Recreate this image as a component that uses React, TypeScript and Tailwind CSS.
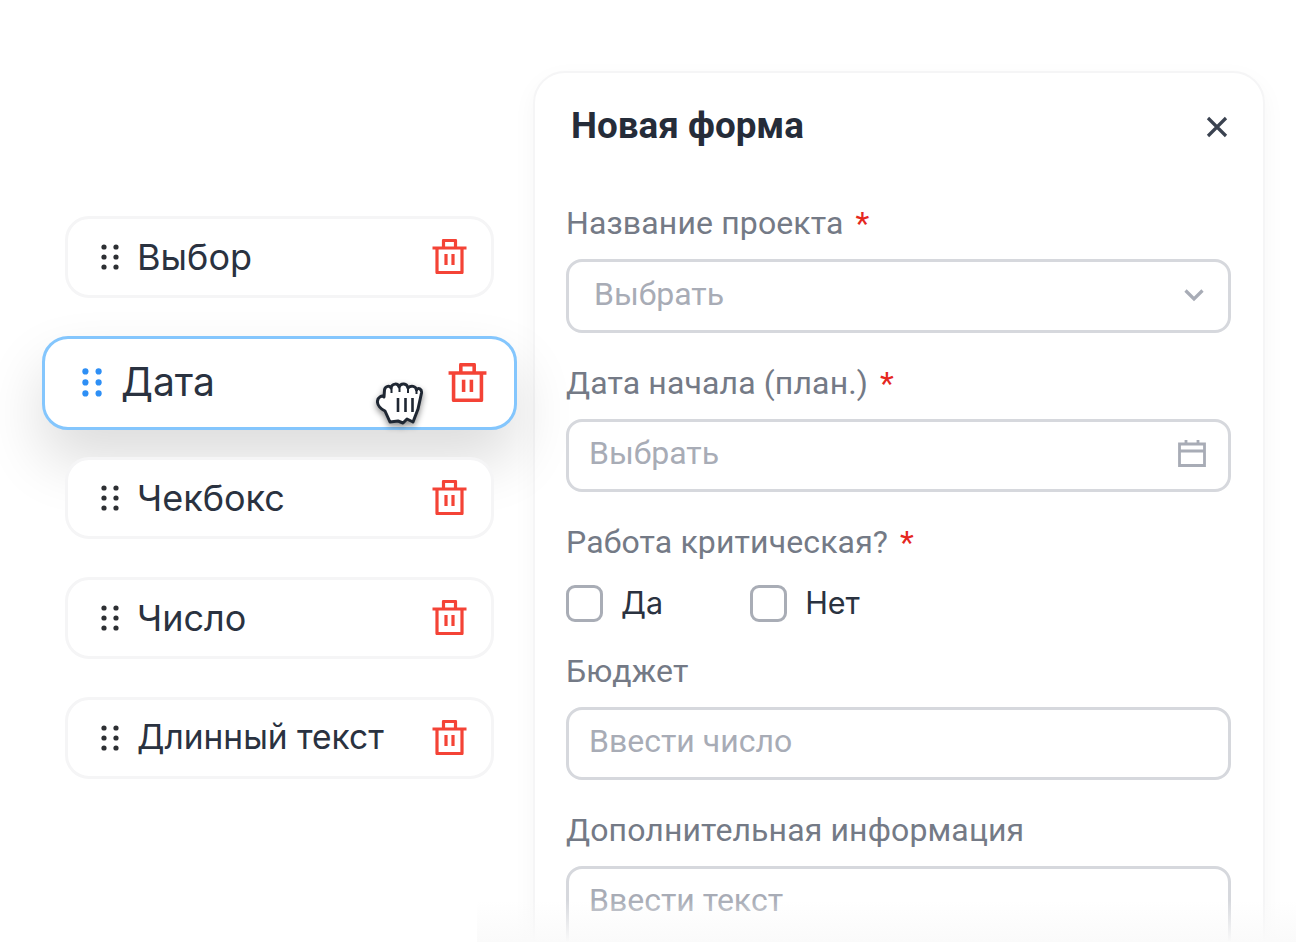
import React from "react";

function Dots({ className, size = 20, r = 2.6 }: { className: string; size?: number; r?: number }) {
  const xs = [4, 16];
  const ys = [3, 13, 23];
  return (
    <svg width={size} height={size * 1.4} viewBox="0 0 20 26" className={className}>
      {xs.map((x) => ys.map((y) => <circle key={`${x}-${y}`} cx={x} cy={y} r={r} fill="currentColor" />))}
    </svg>
  );
}

function Trash({ size = 35 }: { size?: number }) {
  return (
    <svg width={size} height={size} viewBox="0 0 35 35" fill="none" stroke="#f44336" strokeWidth="3.200" strokeLinejoin="round">
      <path d="M0.500 9H34.500" />
      <path d="M5 9V33.500H30V9" />
      <path d="M11.500 8V1.500H23.500V8" />
      <path d="M14 15V26" />
      <path d="M21 15V26" />
    </svg>
  );
}

function Row({ label, textClass = "text-[36px]", over = false }: { label: string; textClass?: string; over?: boolean }) {
  return (
    <div
      className={`flex h-[82px] w-[429px] items-center rounded-[24px] border-[3px] border-[#f5f5f6] bg-white pb-[1px] pl-[32px] pr-[24px] ${over ? "relative z-20" : ""}`}
    >
      <Dots className="shrink-0 text-[#2d2f33]" size={20} />
      <span className={`ml-[17px] flex-1 text-[#2a3240] [font-family:Inter,sans-serif] ${textClass}`}>{label}</span>
      <Trash />
    </div>
  );
}

function Label({ text, req, className = "" }: { text: string; req?: boolean; className?: string }) {
  return (
    <div className={`text-[32px] leading-[40px] tracking-[0.13px] text-[#747a86] ${className}`}>
      {text}
      {req && <span className="ml-[12px] text-[#e5281f]">*</span>}
    </div>
  );
}

function Field({
  text,
  icon,
  h = 74,
  pl = 20,
  top = false,
}: {
  text: string;
  icon?: React.ReactNode;
  h?: number;
  pl?: number;
  top?: boolean;
}) {
  return (
    <div
      style={{ height: h, paddingLeft: pl }}
      className={`flex w-[665px] justify-between rounded-[16px] border-[3px] border-[#d6d8dd] pr-[23px] text-[32px] text-[#a8acb6] ${top ? "items-start pt-[7px]" : "items-center pb-[5px]"}`}
    >
      <span>{text}</span>
      {icon}
    </div>
  );
}

function Check({ label }: { label: string }) {
  return (
    <div className="flex items-center">
      <div className="h-[37px] w-[37px] rounded-[9px] border-[3px] border-[#a9adb6] bg-white" />
      <span className="ml-[18px] text-[30.500px] leading-[40px] text-[#2a3240] [font-family:Inter,sans-serif]">{label}</span>
    </div>
  );
}

export default function App() {
  return (
    <div className="relative flex h-[942px] w-[1296px] items-start overflow-hidden bg-white [font-family:Roboto,sans-serif]">
      <div className="ml-[65px] mt-[216px] flex w-[429px] flex-col items-center">
        <Row label="Выбор" />
        <div className="relative z-10 mb-[27px] mt-[38px] flex h-[94px] w-[475px] shrink-0 items-center rounded-[26px] border-[3px] border-[#84c6fd] bg-white pb-[1px] pl-[36px] pr-[27px] shadow-[0_30px_60px_rgba(0,0,0,0.14)]">
          <Dots className="shrink-0 text-[#2e8ff5]" size={22} r={2.8} />
          <span className="ml-[18px] flex-1 text-[39px] text-[#2a3240] [font-family:Inter,sans-serif]">Дата</span>
          <Trash size={39} />
          <svg width="48" height="46" viewBox="0 0 48 46" className="absolute left-[331px] top-[42px] drop-shadow-[0_3px_3px_rgba(0,0,0,0.45)]">
            <path
              d="M14 41 L9 30 C5 28 1 24 1.500 20 C2 16 6 14 8 16 L8.500 9 C9 5 14 4 15 7 C16 2 22 2 23 6 C25 1.500 31 2 32 7 C35 4 40 5 40.500 9 C42 6 46 8 45.500 12 L42 28 L37 41 L31 38 L27 42 L22 40 Z"
              fill="#fff"
              stroke="#1f2733"
              strokeWidth="3"
              strokeLinejoin="round"
            />
            <path d="M15.500 7V12M23.500 6V11M32 7V12M40.500 9V13" stroke="#1f2733" strokeWidth="2" fill="none" />
            <path d="M22 17V31M29.500 17V31M36.500 17V31" stroke="#1f2733" strokeWidth="2.600" />
          </svg>
        </div>
        <Row label="Чекбокс" over />
        <div className="h-[38px]" />
        <Row label="Число" />
        <div className="h-[38px]" />
        <Row label="Длинный текст" textClass="text-[33.500px]" />
      </div>

      <div className="ml-[39px] mt-[71px] h-[950px] w-[732px] shrink-0 rounded-[32px] border-[2px] border-[#f5f5f6] bg-white pl-[31px] shadow-[0_8px_24px_rgba(0,0,0,0.04)]">
        <div className="flex h-[110px] w-[665px] items-center justify-between pb-[4px] pl-[5px] pr-[3px]">
          <span className="text-[36.800px] font-bold text-[#252c39]">Новая форма</span>
          <svg width="22" height="22" viewBox="0 0 22 22" stroke="#3a4250" strokeWidth="3.200" className="mt-[2px]">
            <path d="M2 2L20 20M20 2L2 20" />
          </svg>
        </div>
        <Label text="Название проекта" req className="mt-[20px]" />
        <div className="h-[16px]" />
        <Field
          text="Выбрать"
          pl={25}
          icon={
            <svg width="20" height="14" viewBox="0 0 20 14" fill="none" stroke="#a8acb6" strokeWidth="3.200" className="mr-[1px] mt-[3px]">
              <path d="M1.500 2.500L10 11L18.500 2.500" />
            </svg>
          }
        />
        <Label text="Дата начала (план.)" req className="mt-[30px]" />
        <div className="h-[16px]" />
        <Field
          text="Выбрать"
          h={73}
          icon={
            <svg width="28" height="28" viewBox="0 0 28 28" fill="none" stroke="#a8acb6" strokeWidth="2.800" className="mr-[-1px]">
              <path d="M1.500 5H26.500V26.500H1.500Z" />
              <path d="M1.500 12H26.500M8 1V6M20 1V6" />
            </svg>
          }
        />
        <Label text="Работа критическая?" req className="mt-[30px]" />
        <div className="mt-[21px] flex gap-[87px]">
          <Check label="Да" />
          <Check label="Нет" />
        </div>
        <Label text="Бюджет" className="mt-[28px]" />
        <div className="h-[16px]" />
        <Field text="Ввести число" h={73} />
        <Label text="Дополнительная информация" className="mt-[30px]" />
        <div className="h-[16px]" />
        <Field text="Ввести текст" h={120} top />
      </div>

      <div className="absolute bottom-0 left-[477px] right-0 h-[42px] bg-gradient-to-b from-[#fafafa]/0 to-[#fafafa]" />
    </div>
  );
}
